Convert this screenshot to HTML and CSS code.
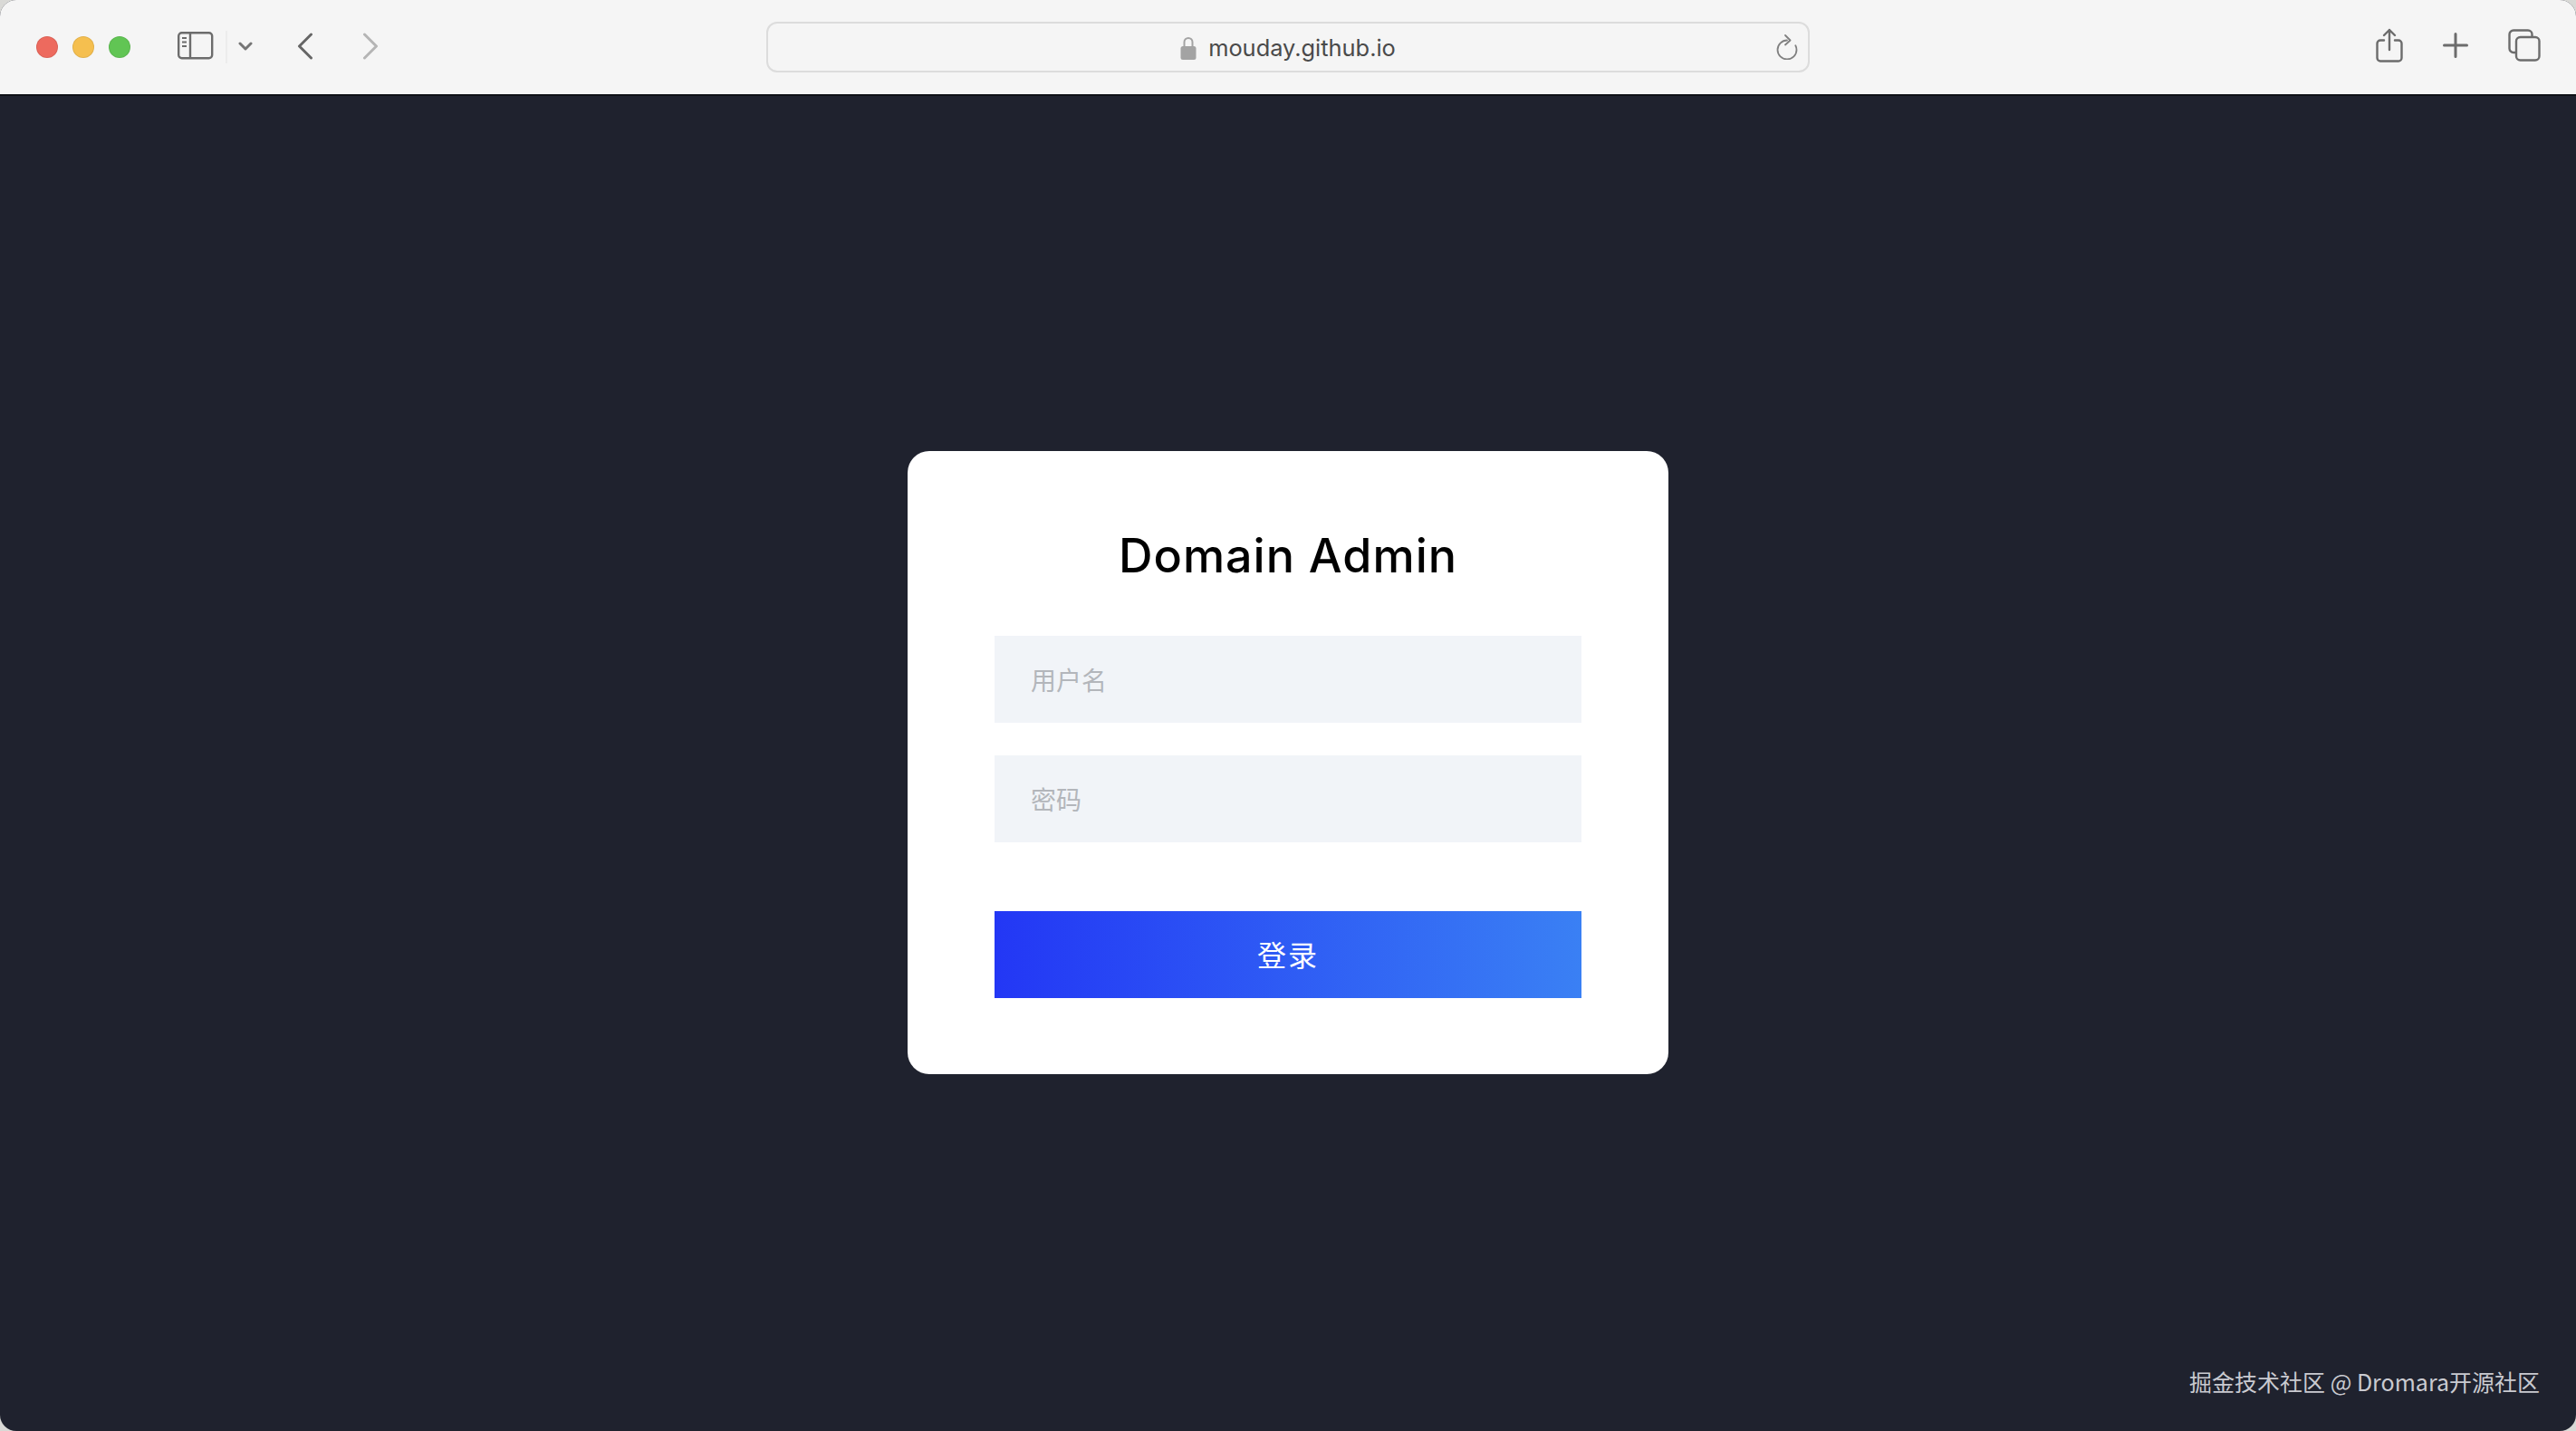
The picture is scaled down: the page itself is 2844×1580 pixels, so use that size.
FILE: index.html
```html
<!DOCTYPE html>
<html lang="zh">
<head>
    <meta charset="UTF-8">
    <meta name="viewport" content="width=device-width, initial-scale=1.0">
    <title>Domain Admin</title>
    <link rel="stylesheet" href="styles.css">
</head>
<body>
    <div class="window">
        <header class="toolbar">
            <div class="lights">
                <span class="light light-red"></span>
                <span class="light light-yellow"></span>
                <span class="light light-green"></span>
            </div>
            <svg class="icon icon-sidebar" width="40" height="32" viewBox="0 0 40 32" fill="none" stroke="#6c6c6c" stroke-width="2.4">
                <rect x="1.2" y="1.2" width="37" height="28" rx="3.5"/>
                <path d="M14 1.2v28"/>
                <path d="M5 7h5M5 11.500h5M5 16h5" stroke-width="2"/>
            </svg>
            <span class="divider"></span>
            <svg class="icon icon-chevron" width="16" height="12" viewBox="0 0 16 12" fill="none" stroke="#757575" stroke-width="3" stroke-linecap="round" stroke-linejoin="round">
                <path d="M2 3l6 6 6-6"/>
            </svg>
            <svg class="icon icon-back" width="18" height="30" viewBox="0 0 18 30" fill="none" stroke="#666" stroke-width="3" stroke-linecap="round" stroke-linejoin="round">
                <path d="M15.500 2L2.500 15l13 13"/>
            </svg>
            <svg class="icon icon-forward" width="18" height="30" viewBox="0 0 18 30" fill="none" stroke="#b5b5b5" stroke-width="3" stroke-linecap="round" stroke-linejoin="round">
                <path d="M2.500 2l13 13-13 13"/>
            </svg>
            <div class="address">
                <svg class="icon-lock" width="18" height="26" viewBox="0 0 18 26" fill="none">
                    <path d="M4.500 12V6.500a4.500 4.500 0 0 1 9 0V12" stroke="#a3a3a3" stroke-width="2"/>
                    <rect x="0.500" y="11" width="17" height="15" rx="2.500" fill="#a3a3a3"/>
                </svg>
                <span class="address-text">mouday.github.io</span>
                <svg class="icon-reload" width="26" height="28" viewBox="0 0 26 28" fill="none" stroke="#808080" stroke-width="1.800" stroke-linecap="round" stroke-linejoin="round">
                    <path d="M13 6.500a10.500 10.500 0 1 0 10.500 10.500c0-1.800-.4-3.400-1.200-4.800"/>
                    <path d="M11 1l5.500 5.500-5.500 5"/>
                </svg>
            </div>
            <div class="actions">
                <svg width="30" height="38" viewBox="0 0 30 38" fill="none" stroke="#6c6c6c" stroke-width="2.400" stroke-linecap="round" stroke-linejoin="round">
                    <path d="M9 13.500H5a3.500 3.500 0 0 0-3.500 3.500v16A3.500 3.500 0 0 0 5 36.500h20a3.500 3.500 0 0 0 3.500-3.500V17a3.500 3.500 0 0 0-3.500-3.500h-4"/>
                    <path d="M15 24V2M9 8l6-6 6 6"/>
                </svg>
                <svg width="28" height="28" viewBox="0 0 28 28" fill="none" stroke="#6c6c6c" stroke-width="3" stroke-linecap="round">
                    <path d="M14 1.500v25M1.500 14h25"/>
                </svg>
                <svg width="36" height="36" viewBox="0 0 36 36" fill="none" stroke="#6c6c6c" stroke-width="2.400" stroke-linejoin="round">
                    <path d="M8.500 26H6a4.500 4.500 0 0 1-4.500-4.500V6A4.500 4.500 0 0 1 6 1.500h16A4.500 4.500 0 0 1 26.500 6v2.500"/>
                    <rect x="9" y="9" width="25.500" height="25.500" rx="4.500"/>
                </svg>
            </div>
        </header>

        <main class="page">
            <form class="card">
                <h1 class="card-title">Domain Admin</h1>
                <input class="field" type="text" placeholder="用户名">
                <input class="field" type="password" placeholder="密码">
                <button class="submit" type="button">登录</button>
            </form>
            <div class="watermark">掘金技术社区 @ Dromara开源社区</div>
        </main>
    </div>
</body>
</html>
```

FILE: styles.css
```css
* {
    box-sizing: border-box;
}
html, body {
    height: 100%;
}
body {
    margin: 0;
    background-color: #d9d9d6;
    font-family: "Noto Sans", "Noto Sans CJK SC", sans-serif;
}
.window {
    height: 100%;
    display: flex;
    flex-direction: column;
    border-radius: 18px;
    overflow: hidden;
    background-color: #1f222e;
}

/* barra del navegador */
.toolbar {
    flex: none;
    height: 106px;
    display: flex;
    align-items: center;
    padding: 0 39px 0 40px;
    background-color: #f5f5f5;
    border-bottom: 2px solid #0e1016;
}
.lights {
    display: flex;
    gap: 16px;
    margin-right: 52px;
}
.light {
    width: 24px;
    height: 24px;
    border-radius: 50%;
    border: 1px solid rgba(0, 0, 0, 0.08);
}
.light-red {
    background-color: #ed6a5e;
}
.light-yellow {
    background-color: #f5bf4f;
}
.light-green {
    background-color: #61c554;
}
.icon {
    flex: none;
    margin-bottom: 2px;
}
.divider {
    width: 2px;
    height: 36px;
    margin-left: 13px;
    background-color: #ececec;
}
.icon-chevron {
    margin-left: 12px;
}
.icon-back {
    margin-left: 49px;
}
.icon-forward {
    margin-left: 54px;
}
.address {
    position: relative;
    flex: none;
    width: 1152px;
    height: 56px;
    margin-left: 428px;
    display: flex;
    align-items: center;
    justify-content: center;
    gap: 13px;
    border: 2px solid #dcdcdc;
    border-radius: 12px;
}
.icon-lock {
    margin-top: 2px;
}
.address-text {
    font-family: "Inter", sans-serif;
    font-size: 25.4px;
    color: #4a4a4a;
}
.icon-reload {
    position: absolute;
    right: 10px;
    top: 12px;
}
.actions {
    flex: none;
    margin-left: auto;
    margin-bottom: 4px;
    display: flex;
    align-items: center;
    gap: 44px;
}

/* contenido */
.page {
    position: relative;
    flex: 1;
    display: flex;
    align-items: center;
    justify-content: center;
    padding-bottom: 2px;
}
.card {
    width: 840px;
    height: 688px;
    padding: 77px 96px 0;
    display: flex;
    flex-direction: column;
    background-color: #ffffff;
    border-radius: 24px;
}
.card-title {
    margin: 0 0 49px;
    height: 78px;
    line-height: 78px;
    text-align: center;
    font-family: "Inter", sans-serif;
    font-size: 52px;
    font-weight: 500;
    letter-spacing: 1px;
    color: #000;
}
.field {
    flex: none;
    width: 100%;
    height: 96px;
    margin-bottom: 36px;
    padding: 0 40px;
    border: none;
    outline: none;
    background-color: #f1f4f8;
    font-family: "Noto Sans CJK SC", sans-serif;
    font-size: 28px;
}
.field::placeholder {
    color: #b3b6bb;
    opacity: 1;
}
.submit {
    flex: none;
    width: 100%;
    height: 96px;
    margin-top: 40px;
    padding-bottom: 3px;
    border: none;
    background: linear-gradient(90deg, #2337f5, #3a80f4);
    color: #fff;
    font-family: "Noto Sans CJK SC", sans-serif;
    font-size: 32px;
    letter-spacing: 2px;
    cursor: pointer;
}
.watermark {
    position: absolute;
    right: 40px;
    bottom: 37px;
    font-family: "Noto Sans CJK SC", sans-serif;
    font-size: 25px;
    line-height: 36px;
    color: #c9cad0;
}
```
